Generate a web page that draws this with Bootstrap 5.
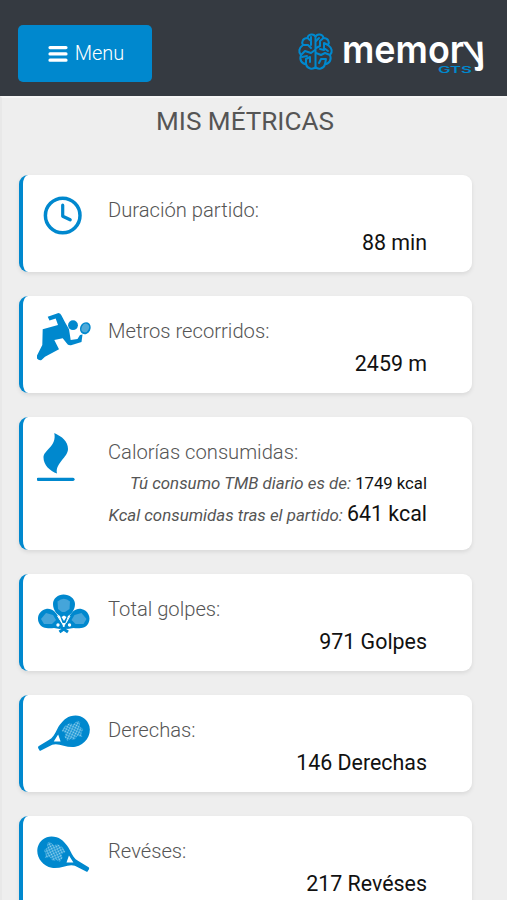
<!DOCTYPE html>
<html lang="es">
<head>
<meta charset="utf-8">
<meta name="viewport" content="width=device-width, initial-scale=1">
<title>Mis métricas</title>
<link rel="stylesheet" href="https://cdn.jsdelivr.net/npm/bootstrap@5.3.0/dist/css/bootstrap.min.css">
<style>
body{font-family:Roboto,"Liberation Sans",sans-serif;background:#eee;height:900px;overflow:hidden}
.topbar{height:96px;background:#353a41;padding:0 19px 0 18px}
.btn-menu{--bs-btn-bg:#0088ce;--bs-btn-color:#fff;--bs-btn-hover-bg:#0079b8;--bs-btn-hover-color:#fff;width:134px;height:57px;margin-top:25px;border:0;border-radius:5px;font-size:20px;font-weight:300;line-height:1;gap:7px;padding:0 0 2px 2px}
.btn-menu svg{margin-top:3px}
.brand{width:190px;height:64px;margin-top:18px;overflow:visible}
.page-area{border-top:2px solid #f6f6f6;border-left:2px solid #e8e8e8;height:804px}
.page-title{font-size:26.1px;line-height:30px;color:#555;font-weight:400;margin:8px 19px 38.7px 0}
.metrics{padding-left:16.5px;gap:24px}
.metric{width:453px;height:97.3px;flex:none;background:#fff;border-left:4px solid #0088ce;border-radius:9px;box-shadow:0 2px 4px rgba(0,0,0,.09);padding:0 44.5px 0 14px}
.metric.tall{height:132.3px}
.metric>svg{width:60px;height:60px;margin-top:12px;flex:none}
.metric-text{padding:22px 0 0 11.5px;flex:1;white-space:nowrap}
.tall .metric-text{padding-top:21.5px}
.metric-label{font-size:20.2px;font-weight:300;color:#555;line-height:26px}
.metric-value{font-size:21.4px;line-height:26px;margin-top:7.3px;color:#111;text-align:right}
.metric-note{font-size:16.7px;line-height:30px;color:#111;text-align:right}
.metric-note em{color:#555;font-size:16.9px}
.metric-note strong{font-weight:400;font-size:21.4px;line-height:1}
.metric-note.first{margin-top:3.5px}
.metric-note.last{padding-top:.7px}
</style>
<script src="https://cdn.jsdelivr.net/npm/bootstrap@5.3.0/dist/js/bootstrap.bundle.min.js"></script>
</head>
<body>
<svg width="0" height="0" class="position-absolute" aria-hidden="true">
<defs>
<pattern id="dots" width="2.6" height="2.6" patternUnits="userSpaceOnUse" patternTransform="rotate(25)"><circle cx="1.3" cy="1.3" r="1" fill="#8fd0ee"/></pattern>
<symbol id="racket" viewBox="0 0 60 60">
<path fill="#0088ce" fill-rule="evenodd" d="M56.300 28C54 20 46 15 37 18C31 20 27 25 23.500 31C21 36 19 40 15 42L4.500 48.500Q3.500 49.500 4.500 51L6 53.300L18.500 47C25 44.500 33 50.500 42 49C52 47 58.500 37 56.300 28ZM24.500 36.500L27 43.500L20 43.500Z"/>
<path fill="url(#dots)" d="M31 28L36 25L40 26L44 22.500L47 24L46 28L50 31L48 35L49 39L44 38L41 42L37 41L34 43L31 39L32 35L28 33Z"/>
</symbol>
</defs>
</svg>
<header class="topbar d-flex justify-content-between align-items-start">
<button class="btn btn-menu d-flex align-items-center justify-content-center" type="button">
<svg width="20" height="18" viewBox="0 0 20 18" stroke="#fff" stroke-width="3.2" stroke-linecap="round"><path d="M2 2.600H18M2 8.900H18M2 15.200H18"/></svg>
<span>Menu</span>
</button>
<svg class="brand" viewBox="0 -10 190 64" role="img" aria-label="memory GTS">
<g fill="none" stroke="#0088ce" stroke-width="2" stroke-linejoin="round" stroke-linecap="round">
<path d="M17.500 8V40M17.500 9C16 5 10 6 9.500 10C5 10 3 14 5 17C1 20 0 24 3 27C1 32 4 36 8 36C9 41 15 42 17.500 39M17.500 9C19 5 25 6 25.500 10C30 10 32 14 30 17C34 20 35 24 32 27C34 32 31 36 27 36C26 41 20 42 17.500 39"/>
<path d="M9.500 10L13 13V17M5 17H10L13 20M3 27L7 23L13 25L17 22M8 36V31L12 29V34M4 29L9 28M25.500 10L22 13V18L18 20M30 17L26 15V20L30 23M32 27L27 25L23 27L18 25M27 36L28 31L23 31L21 35M22 21L26 22M13 9V12M21 10L18 13"/>
</g>
<g fill="#fff" font-family="Inter,sans-serif" font-weight="600" font-size="39">
<text x="44" y="35" textLength="122" lengthAdjust="spacingAndGlyphs">memor</text>
<text transform="translate(172 35) skewX(21)" textLength="21" lengthAdjust="spacingAndGlyphs">y</text>
</g>
<text x="140" y="45" textLength="34" lengthAdjust="spacingAndGlyphs" fill="#0088ce" font-family="Inter,sans-serif" font-weight="600" font-size="8.500">GTS</text>
</svg>
</header>
<main class="page-area">
<h1 class="page-title text-center">MIS MÉTRICAS</h1>
<div class="metrics d-flex flex-column">
<section class="metric d-flex">
<svg viewBox="0 0 60 60" fill="none" stroke="#0088ce"><circle cx="25.700" cy="28.500" r="17.300" stroke-width="3.500"/><path d="M25.700 18.200V29.200L33.200 32.800" stroke-width="3.200" stroke-linecap="round" stroke-linejoin="round"/></svg>
<div class="metric-text"><div class="metric-label">Duración partido:</div><div class="metric-value">88 min</div></div>
</section>
<section class="metric d-flex">
<svg viewBox="0 0 60 60" fill="#0088ce"><path d="M10.700 8.700L21.500 5Q23.500 5 24.500 7.500L28 14.300L32 21.300L33.700 32L40.500 31L43 27L45.500 26.500L44.500 34L34 37.200Q31 37.800 29.500 35L25.700 30.300L17.300 32L22 41.300L8 48.700L4.500 52Q2 53 0 50.500L-.3 48L5.300 37L5.700 21.300L21 17L18.700 10.500L12.500 12.500Z"/><circle cx="36" cy="17.200" r="4.900"/><ellipse cx="48.300" cy="20.200" rx="5.200" ry="6.200" transform="rotate(25 48.300 20.200)"/><ellipse cx="48.300" cy="20" rx="3.600" ry="4.500" transform="rotate(25 48.300 20)" fill="#4fa9d8"/></svg>
<div class="metric-text"><div class="metric-label">Metros recorridos:</div><div class="metric-value">2459 m</div></div>
</section>
<section class="metric tall d-flex">
<svg viewBox="0 0 60 60" fill="#0088ce"><path d="M17.300 4C25 7.500 31 12.500 31 20C31 28.500 18 34 20 44.500C13 42 6.500 36 6.500 28.500C6.500 21 20 17.500 17.300 4Z"/><path d="M1.200 50.300H36" stroke="#0088ce" stroke-width="3.200" stroke-linecap="round"/></svg>
<div class="metric-text"><div class="metric-label">Calorías consumidas:</div><div class="metric-note first"><em>Tú consumo TMB diario es de:</em> 1749 kcal</div><div class="metric-note last"><em>Kcal consumidas tras el partido:</em> <strong>641 kcal</strong></div></div>
</section>
<section class="metric d-flex">
<svg viewBox="0 0 60 60"><g fill="#0088ce"><path d="M26.500 8.500C32.500 8.500 38 12.500 38 18C38 24 34 28.500 31 30L28.500 37H25.500L23 30C20 28.500 16 24 16 18C16 12.500 21 8.500 26.500 8.500Z"/><path d="M2 37C-1 31 3 24 9 23C15 22 19 26 22 32L26 40L23 43L17 42C11 43 4 42 2 37Z"/><path d="M51.500 37C54.500 31 50.500 24 44.500 23C38.500 22 34.500 26 31.500 32L27.500 40L30.500 43L36.500 42C42.500 43 49.500 42 51.500 37Z"/></g><g fill="#45a5da"><path d="M20.500 15.500Q27 10 33 15.500L32.500 23L28 26H25L21 23Z"/><path d="M4 33L9 27L16 29L19 34L15 38L7 38Z"/><path d="M49.500 33L44.500 27L37.500 29L34.500 34L38.500 38L46.500 38Z"/></g><g fill="#fff"><path d="M24.500 31L27 29.500L29.500 31L27 35Z"/><circle cx="21" cy="39" r="1.700"/><circle cx="32.500" cy="39" r="1.700"/></g><path d="M20.500 30L25 37M33 30L29 37" stroke="#fff"/><path d="M22.500 46L31 40M31 46L22.500 40" stroke="#0088ce" stroke-width="3"/></svg>
<div class="metric-text"><div class="metric-label">Total golpes:</div><div class="metric-value">971 Golpes</div></div>
</section>
<section class="metric d-flex">
<svg viewBox="3 8.500 61 61"><use href="#racket" width="60" height="60"/></svg>
<div class="metric-text"><div class="metric-label">Derechas:</div><div class="metric-value">146 Derechas</div></div>
</section>
<section class="metric d-flex">
<svg viewBox="3 8.500 61 61"><use href="#racket" width="60" height="60" transform="translate(60 0) scale(-1 1)"/></svg>
<div class="metric-text"><div class="metric-label">Revéses:</div><div class="metric-value">217 Revéses</div></div>
</section>
</div>
</main>
</body>
</html>
